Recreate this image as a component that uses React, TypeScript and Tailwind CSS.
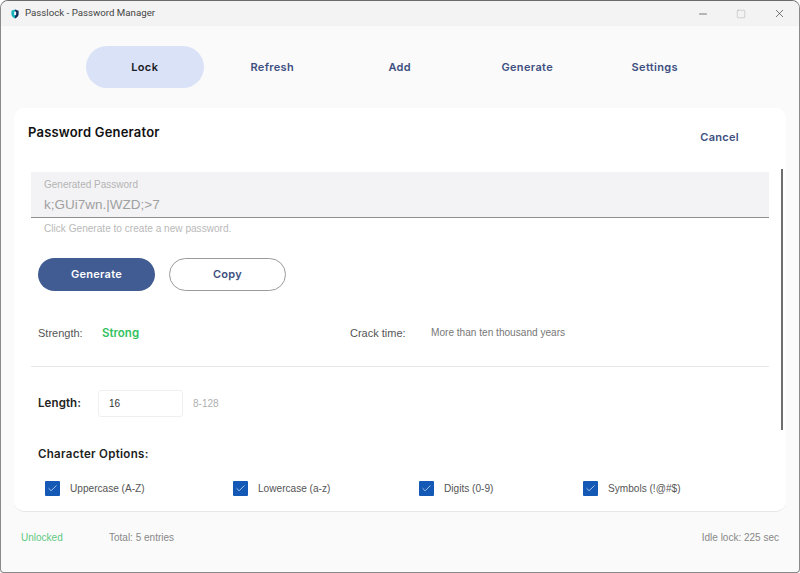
import { Check, Minus, Square, X } from 'lucide-react';

const NAV_ITEMS = ['Lock', 'Refresh', 'Add', 'Generate', 'Settings'];

const OPTIONS = [
  { label: 'Uppercase (A-Z)', width: 'w-[188px]' },
  { label: 'Lowercase (a-z)', width: 'w-[186px]' },
  { label: 'Digits (0-9)', width: 'w-[164px]' },
  { label: 'Symbols (!@#$)', width: 'w-[160px]' },
];

function ShieldIcon() {
  return (
    <svg width="8" height="10" viewBox="0 0 10 12">
      <path d="M5 0.5 L9.5 2 V6 C9.5 8.6 7.5 10.4 5 11.5 Z" fill="#12305c" />
      <path d="M5 0.5 L0.5 2 V6 C0.5 8.6 2.5 10.4 5 11.5 Z" fill="#17b3bd" />
      <rect x="4" y="3" width="2.4" height="4.5" rx="1" fill="#ffffff" />
    </svg>
  );
}

export default function App() {
  return (
    <div className="flex h-[573px] w-[800px] flex-col overflow-hidden rounded-t-[8px] rounded-b-[4px] border border-[#8a8a8a] border-t-[#6a6a6a] bg-[#fafafa] font-['Liberation_Sans',sans-serif]">
      <div className="flex h-[25px] shrink-0 items-center bg-[#f3f3f3] pl-[10px]">
        <ShieldIcon />
        <span className="ml-[6px] font-['Roboto',sans-serif] text-[9.7px] text-[#444444]">Passlock - Password Manager</span>
        <div className="ml-auto flex items-center pr-[13px] text-[#444444]">
          <Minus size={12} strokeWidth={1.4} className="mr-[27px]" />
          <Square size={10} strokeWidth={1} className="mr-[27px] text-[#a0a0a0]" />
          <X size={13} strokeWidth={1.3} />
        </div>
      </div>

      <div className="flex shrink-0 gap-[10px] pt-[20px] pl-[85px]">
        {NAV_ITEMS.map((item, i) => (
          <button
            key={item}
            className={`h-[42px] w-[117.5px] rounded-full pt-[1px] font-['Inter',sans-serif] text-[11px] font-semibold tracking-[0.35px] ${i === 0 ? 'bg-[#dae2f8] text-[#1a1c24]' : 'text-[#3d4f80]'}`}
          >
            {item}
          </button>
        ))}
      </div>

      <div className="mx-[13px] mt-[20px] flex h-[404px] shrink-0 flex-col rounded-[10px] border-b border-[#e8e8e8] bg-white">
        <div className="flex h-[48px] shrink-0 items-start justify-between font-['Inter',sans-serif]">
          <h1 className="pt-[15px] pl-[14px] text-[13px] font-semibold tracking-[0.2px] text-[#111111]">Password Generator</h1>
          <button className="mt-[21px] mr-[47px] text-[11px] font-semibold tracking-[0.3px] text-[#3d4f80]">Cancel</button>
        </div>

        <div className="relative min-h-0 flex-1 pt-[16px] pr-[17px] pl-[17px]">
          <div className="absolute top-[13px] right-[3px] h-[261px] w-[2px] bg-[#6e6e6e]" />

          <div className="h-[46px] border-b border-[#8e8e8e] bg-[#f3f3f5] px-[13px] pt-[6px]">
            <div className="text-[10px] leading-[13px] text-[#b4b4b4]">Generated Password</div>
            <div className="mt-[5px] text-[13.5px] leading-[17px] text-[#a0a0a0]">k;GUi7wn.|WZD;&gt;7</div>
          </div>
          <p className="mt-[4px] pl-[13px] text-[10.1px] leading-[13px] text-[#b9b9b9]">Click Generate to create a new password.</p>

          <div className="mt-[23px] flex gap-[14px] pl-[7px] font-['Inter',sans-serif]">
            <button className="h-[33px] w-[117px] rounded-full bg-[#415c92] text-[11px] font-semibold tracking-[0.3px] text-white">Generate</button>
            <button className="h-[33px] w-[117px] rounded-full border border-[#9a9a9a] bg-white text-[11px] font-semibold tracking-[0.3px] text-[#3d4f80]">Copy</button>
          </div>

          <div className="mt-[34px] flex items-center pl-[7px] text-[11px] leading-[16px]">
            <span className="w-[64px] text-[#555555]">Strength:</span>
            <span className="w-[248px] font-['Inter',sans-serif] text-[11.5px] font-semibold text-[#34c25f]">Strong</span>
            <span className="w-[81px] text-[#555555]">Crack time:</span>
            <span className="text-[10.1px] text-[#777777]">More than ten thousand years</span>
          </div>

          <div className="mt-[25px] border-t border-[#e6e6e6]" />

          <div className="mt-[23px] flex items-center pl-[7px]">
            <span className="w-[60px] pt-[1px] font-['Inter',sans-serif] text-[11.5px] font-semibold tracking-[0.1px] text-[#222222]">Length:</span>
            <input
              readOnly
              value="16"
              className="h-[27px] w-[85px] rounded-[3px] border border-[#efefef] bg-white px-[10px] text-[10px] text-[#333333] outline-none"
            />
            <span className="ml-[10px] text-[10px] text-[#b0b0b0]">8-128</span>
          </div>

          <div className="mt-[29px] pl-[7px] font-['Inter',sans-serif] text-[11.5px] leading-[16px] font-semibold tracking-[0.3px] text-[#222222]">Character Options:</div>

          <div className="mt-[19px] flex pl-[14px]">
            {OPTIONS.map(opt => (
              <div key={opt.label} className={`flex items-center ${opt.width}`}>
                <span className="flex h-[15px] w-[15px] items-center justify-center rounded-[1px] bg-[#1359b5]">
                  <Check size={11} strokeWidth={1.6} className="text-[#dfeafa]" />
                </span>
                <span className="ml-[10px] text-[10.1px] text-[#555555]">{opt.label}</span>
              </div>
            ))}
          </div>
        </div>
      </div>

      <div className="flex flex-1 items-start pt-[19px] pr-[20px] pl-[20px] text-[10px] leading-[13px]">
        <span className="w-[88px] text-[#5fc97f]">Unlocked</span>
        <span className="text-[#888888]">Total: 5 entries</span>
        <span className="ml-auto text-[#888888]">Idle lock: 225 sec</span>
      </div>
    </div>
  );
}
